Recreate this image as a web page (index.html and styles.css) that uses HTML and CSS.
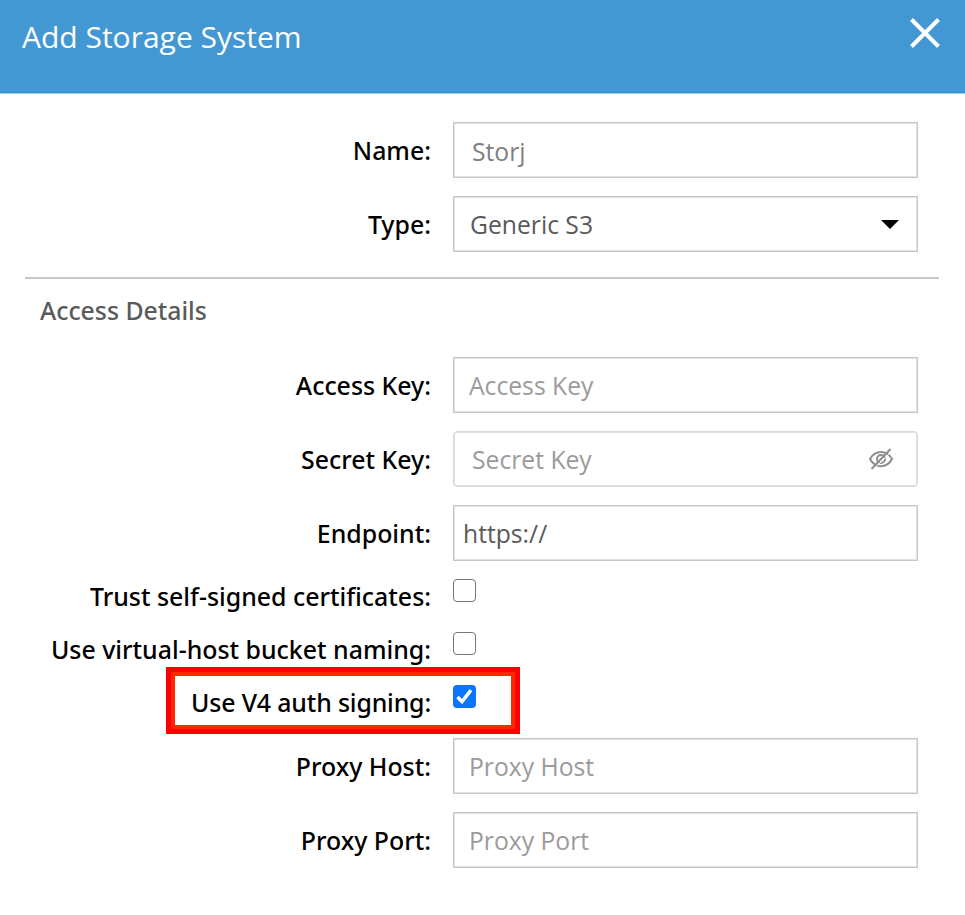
FILE: index.html
```
<!DOCTYPE html>
<html lang="en">
<head>
<meta charset="utf-8">
<title>Add Storage System</title>
<link rel="stylesheet" href="styles.css">
</head>
<body>
<header class="header">
  <h1 class="title">Add Storage System</h1>
  <svg class="close" viewBox="0 0 32 32" width="32" height="32"><path d="M2.500 2.500 29.500 29.500M29.500 2.500 2.500 29.500"/></svg>
</header>
<main class="form">
  <div class="row"><div class="label">Name:</div><div class="field name"><span>Storj</span></div></div>
  <div class="row"><div class="label">Type:</div><div class="field type"><span>Generic S3</span><svg class="caret" viewBox="0 0 18 9" width="18" height="9"><path d="M0 0h18L9 9z"/></svg></div></div>
  <div class="divider"></div>
  <h2 class="section">Access Details</h2>
  <div class="row"><div class="label">Access Key:</div><div class="field hint"><span>Access Key</span></div></div>
  <div class="row"><div class="label">Secret Key:</div><div class="field hint secret"><span>Secret Key</span>
    <svg class="eye" viewBox="0 0 26 24" width="26" height="24"><path d="M2 12C7 2.500 19 2.500 24 12 19 21.500 7 21.500 2 12Z"/><circle cx="13" cy="12" r="4"/><path class="gap" d="M5.500 22.500 24.500 3.500"/><path d="M3.500 22 22.500 2"/></svg></div></div>
  <div class="row"><div class="label">Endpoint:</div><div class="field endpoint"><span>https://</span></div></div>
  <div class="row check"><div class="label">Trust self-signed certificates:</div><span class="box"></span></div>
  <div class="row check"><div class="label">Use virtual-host bucket naming:</div><span class="box"></span></div>
  <div class="row check"><div class="label tight">Use V4 auth signing:</div><span class="box on"><svg viewBox="0 0 23 23" width="23" height="23"><path d="M4.500 12 9 16.600 18 5.200"/></svg></span><div class="marker"></div></div>
  <div class="row"><div class="label">Proxy Host:</div><div class="field hint"><span>Proxy Host</span></div></div>
  <div class="row"><div class="label">Proxy Port:</div><div class="field hint"><span>Proxy Port</span></div></div>
</main>
</body>
</html>
```
FILE: styles.css
```
* { box-sizing: border-box; }
body { margin: 0; background: #fff; color: #000; font: 24.7px/34px "Open Sans", sans-serif; }
svg { display: block; fill: none; flex: none; }
.header { display: flex; justify-content: space-between; align-items: flex-start; height: 94px; padding: 17px 24px 0 22px; background: #4397d3; border-bottom: 1px solid #a9d0ec; box-shadow: inset 0 -1px #2e8fd4; }
.title { margin: 0; color: #fff; font-size: 30px; font-weight: 400; line-height: 40px; }
.close { stroke: #fff; stroke-width: 4; }
.form { padding-top: 19px; }
.row { display: flex; align-items: center; height: 74px; }
.label { width: 431px; margin-right: 22px; text-align: right; font: 500 24.9px/34px "Noto Sans", sans-serif; white-space: nowrap; }
.tight { letter-spacing: -.16px; }
.field { display: flex; align-items: center; justify-content: space-between; width: 465px; height: 56px; padding: 0 18px 0 15px; border: 1px solid #c6c6c6; box-shadow: inset 0 0 0 1px #e2e2e2; color: #5a5a5a; }
.field span { padding-top: 2px; }
.name { color: #808080; padding-left: 18px; padding-top: 2px; }
.type { padding-left: 16px; }
.caret { fill: #000; }
.hint { color: #9b9b9b; }
.secret { padding-left: 18px; padding-right: 23px; border-color: #d9d9d9; border-radius: 4px; }
.eye { stroke: #8e8e8e; stroke-width: 2; margin-bottom: 1px; }
.eye .gap { stroke: #fff; stroke-width: 1; }
.endpoint { padding-left: 9px; }
.divider { height: 2px; margin: 16px 26px 0 25px; background: #c8c8c8; }
.section { margin: 14px 0 21px 40px; color: #5a5a5a; font: 500 24.8px/34px "Noto Sans", sans-serif; }
.check { position: relative; height: 53px; }
.check .label { margin-bottom: 2px; }
.box { width: 23px; height: 23px; margin: 0 0 13px .4px; border: 1.5px solid #767676; border-radius: 4px; background: #fff; }
.on { border: 0; background: #0a75ff; }
.on path { stroke: #fff; stroke-width: 3.5; }
.marker { position: absolute; left: 166px; top: -9px; width: 354px; height: 67px; border: 5px solid #f00; box-shadow: inset 0 0 0 4px #ff2600; }
```
